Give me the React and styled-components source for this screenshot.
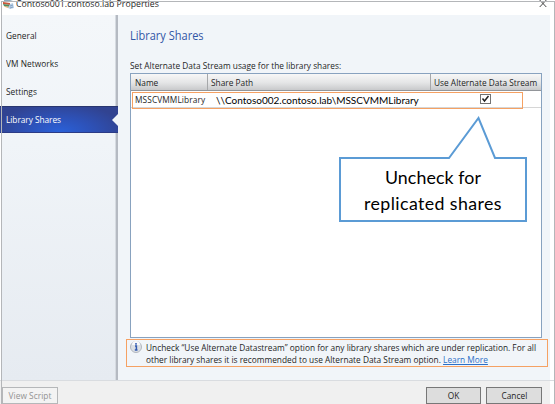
import React from "react";
import styled, { createGlobalStyle, css } from "styled-components";

const Global = createGlobalStyle`
  * { box-sizing: border-box; }
  body { margin: 0; background: #fff; overflow: hidden; }
`;

const narrow = css`
  transform: scaleX(0.895);
  transform-origin: left center;
  white-space: nowrap;
`;

const Dialog = styled.div`
  position: relative;
  width: 555px;
  height: 404px;
  display: grid;
  grid-template-rows: 15px 366px 23px;
  overflow: hidden;
  background: #fff;
  font-family: "Open Sans", "Noto Sans", sans-serif;
  font-size: 9.3px;
  color: #1e1e1e;
`;
const Frame = styled.div`
  position: absolute;
  inset: 1px 0 0 1px;
  border: 1px solid #b4b6b9;
  border-bottom: 0;
  pointer-events: none;
`;
const Label = styled.span`
  ${narrow}
  display: block;
  line-height: 14px;
  letter-spacing: ${(p) => p.$track || 0}px;
`;
const TitleBar = styled.header`
  display: flex;
  justify-content: space-between;
  padding: 0 8px 0 3px;
`;
const TitleGroup = styled.div`
  display: flex;
  gap: 1px;
  margin-top: -3px;
  font-size: 9.75px;
`;
const ServerIcon = styled.svg`
  flex: none;
  width: 12px;
  height: 10px;
  margin-top: 3px;
`;
const CloseIcon = styled.svg`
  width: 8px;
  height: 8px;
`;
const Body = styled.div`
  display: grid;
  grid-template-columns: 118px 432px;
  padding-right: 5px;
  border-bottom: 1px solid #d9dce0;
`;
const Sidebar = styled.nav`
  display: flex;
  flex-direction: column;
  padding-top: 7px;
  margin-left: 2px;
  background: linear-gradient(#f4f7fa, #f0f4f8 35%, #e6ebf1);
  border-right: 2px solid #b5bac2;
  box-shadow: inset -1px 0 #d6dbe1;
`;
const NavItem = styled.div`
  position: relative;
  display: flex;
  align-items: center;
  height: 28px;
  padding-left: 4px;
`;
const SelectedItem = styled(NavItem)`
  height: 27px;
  margin: 0 -2px 0 -2px;
  padding-left: 6px;
  color: #fff;
  background: radial-gradient(ellipse 66px 29px at 50% 100%, #2a61d9, #2d52b9 48%, #314391);
  border-top: 1px solid #29366f;
  border-bottom: 1px solid #2b3b86;
`;
const Pointer = styled.svg`
  position: absolute;
  right: 0;
  top: 7px;
  width: 6px;
  height: 12px;
`;
const Main = styled.main`
  display: flex;
  flex-direction: column;
  background: #f1f5f9;
  padding: 12px 2px 0 12px;
`;
const Heading = styled.h1`
  ${narrow}
  margin: 0 0 14px;
  height: 18px;
  font-size: 12.3px;
  font-weight: 400;
  line-height: 18px;
  color: #3156a6;
`;
const Table = styled.section`
  position: relative;
  width: 412px;
  height: 265px;
  background: #fff;
  border: 1px solid #88a2bf;
  box-shadow: inset 0 1px #c5d4e3;
`;
const HeaderRow = styled.div`
  display: grid;
  grid-template-columns: 76px 223px 111px;
  height: 17px;
  background: linear-gradient(#f7f7f7, #e4e5e6 55%, #c8c9cb);
  border-bottom: 1px solid #929599;
`;
const HeaderCell = styled.div`
  display: flex;
  align-items: center;
  min-width: 0;
  padding: 1px 0 0 ${(p) => (p.$first ? 4 : 3)}px;
  border-left: ${(p) => (p.$first ? "0" : "1px solid #a6a8aa")};
`;
const DataRow = styled.div`
  display: grid;
  grid-template-columns: 85px 264px 61px;
  height: 17px;
  border-bottom: 1px solid #d6d6d6;
`;
const Cell = styled.div`
  display: flex;
  align-items: center;
`;
const NameCell = styled(Cell)`
  padding: 2px 0 0 4px;
`;
const PathCell = styled(Cell)`
  padding-top: 2px;
  font-family: Lato, sans-serif;
  font-size: 10px;
  line-height: 14px;
  white-space: nowrap;
  color: #000;
`;
const RowHighlight = styled.div`
  position: absolute;
  left: 1px;
  top: 18px;
  width: 391px;
  height: 17px;
  border: 1px solid #f5a163;
`;
const CheckIcon = styled.svg`
  flex: none;
  width: 11px;
  height: 11px;
`;
const Callout = styled.div`
  position: absolute;
  left: 208px;
  top: 42px;
  width: 190px;
  height: 108px;
`;
const CalloutShape = styled.svg`
  position: absolute;
  inset: 0;
`;
const CalloutText = styled.div`
  position: relative;
  display: flex;
  flex-direction: column;
  align-items: center;
  padding: 48px 2px 0 0;
  font-family: Lato, sans-serif;
  font-size: 17.8px;
  color: #000;
`;
const CalloutLine = styled.span`
  height: 26px;
  line-height: 26px;
  white-space: nowrap;
  letter-spacing: ${(p) => p.$track}px;
`;
const Notice = styled.aside`
  display: flex;
  gap: 4px;
  width: 422px;
  height: 28px;
  margin: 1px 0 0 -4px;
  padding: 1px 0 0 3px;
  border: 1px solid #f5a163;
`;
const InfoIcon = styled.svg`
  flex: none;
  width: 12px;
  height: 12px;
`;
const NoticeText = styled.div`
  ${narrow}
`;
const NoticeLine = styled.div`
  height: 12px;
  line-height: 14px;
`;
const Link = styled.a`
  color: #2b6fc7;
  text-decoration: underline;
`;
const Footer = styled.footer`
  display: flex;
  align-items: flex-end;
  gap: 5px;
  margin-right: 5px;
  padding: 0 8px 0 2px;
  background: #f0f0f0;
`;
const Button = styled.button`
  display: flex;
  align-items: center;
  justify-content: center;
  width: ${(p) => p.$width}px;
  height: 17px;
  padding: 0;
  border: 1px solid #777;
  background: #ddd;
  color: #222;
  font: inherit;
  ${Label} { transform-origin: center; }
  &:first-child { margin-right: auto; }
  &:disabled {
    color: #929292;
    background: #f3f3f3;
    border-color: #b5b7b9;
  }
`;

export default function App() {
  return (
    <Dialog>
      <Global />
      <TitleBar>
        <TitleGroup>
          <ServerIcon viewBox="0 0 12 10">
            <path d="M1 0h6l3 1-4 1-5-1z" fill="#8ba9bb" />
            <path d="M0 2l7 1v2L0 4z" fill="#c9583c" />
            <path d="M0 4l7 1v2L1 6z" fill="#4d8c63" />
            <path d="M1 6l5 1v1L2 7z" fill="#d99a4e" />
            <path d="M7 4l3-1 1 5-4 1-2-1z" fill="#b8cfe7" />
            <path d="M7 6l3-1M7 8l3-1" stroke="#6f8fb5" strokeWidth=".7" fill="none" />
          </ServerIcon>
          <Label>Contoso001.contoso.lab Properties</Label>
        </TitleGroup>
        <CloseIcon viewBox="0 0 8 8"><path d="M.7 0l6.6 7M7.3 0L.7 7" stroke="#444" fill="none" /></CloseIcon>
      </TitleBar>
      <Body>
        <Sidebar>
          <NavItem><Label>General</Label></NavItem>
          <NavItem><Label $track={0.05}>VM Networks</Label></NavItem>
          <NavItem><Label>Settings</Label></NavItem>
          <SelectedItem>
            <Label $track={-0.05}>Library Shares</Label>
            <Pointer viewBox="0 0 6 12"><path d="M6 0L0 6l6 6z" fill="#f1f5f9" /></Pointer>
          </SelectedItem>
        </Sidebar>
        <Main>
          <Heading>Library Shares</Heading>
          <Label>Set Alternate Data Stream usage for the library shares:</Label>
          <Table>
            <HeaderRow>
              <HeaderCell $first><Label>Name</Label></HeaderCell>
              <HeaderCell><Label>Share Path</Label></HeaderCell>
              <HeaderCell><Label>Use Alternate Data Stream</Label></HeaderCell>
            </HeaderRow>
            <DataRow>
              <NameCell><Label $track={0.1}>MSSCVMMLibrary</Label></NameCell>
              <PathCell>{"\\\\Contoso002.contoso.lab\\MSSCVMMLibrary"}</PathCell>
              <Cell>
                <CheckIcon viewBox="0 0 11 11">
                  <rect x=".5" y=".5" width="10" height="9" fill="#fff" stroke="#737373" />
                  <path d="M2.5 4.5l2 2.5 4-5" fill="none" stroke="#222" strokeWidth="1.5" />
                </CheckIcon>
              </Cell>
            </DataRow>
            <RowHighlight />
            <Callout>
              <CalloutShape width="190" height="108" viewBox="0 0 190 108">
                <path d="M1 42H110L139.500 2L156 42H187V105H1Z" fill="#fff" stroke="#5b9bd5" strokeWidth="2" />
              </CalloutShape>
              <CalloutText>
                <CalloutLine $track={0.1}>Uncheck for</CalloutLine>
                <CalloutLine $track={0.4}>replicated shares</CalloutLine>
              </CalloutText>
            </Callout>
          </Table>
          <Notice>
            <InfoIcon viewBox="0 0 12 12">
              <circle cx="6" cy="6" r="5.500" fill="#dce0e5" stroke="#b1b6bd" />
              <path d="M2 4a4 4 0 0 1 8 0" fill="#f8f9fa" />
              <path d="M6 2v1.700M5 5h1.400v4M4.800 9h2.700" stroke="#3159b0" strokeWidth="1.500" fill="none" />
            </InfoIcon>
            <NoticeText>
              <NoticeLine>Uncheck “Use Alternate Datastream” option for any library shares which are under replication. For all</NoticeLine>
              <NoticeLine>other library shares it is recommended to use Alternate Data Stream option. <Link>Learn More</Link></NoticeLine>
            </NoticeText>
          </Notice>
        </Main>
      </Body>
      <Footer>
        <Button $width={56} disabled><Label $track={0.05}>View Script</Label></Button>
        <Button $width={55}><Label>OK</Label></Button>
        <Button $width={56}><Label>Cancel</Label></Button>
      </Footer>
      <Frame />
    </Dialog>
  );
}
